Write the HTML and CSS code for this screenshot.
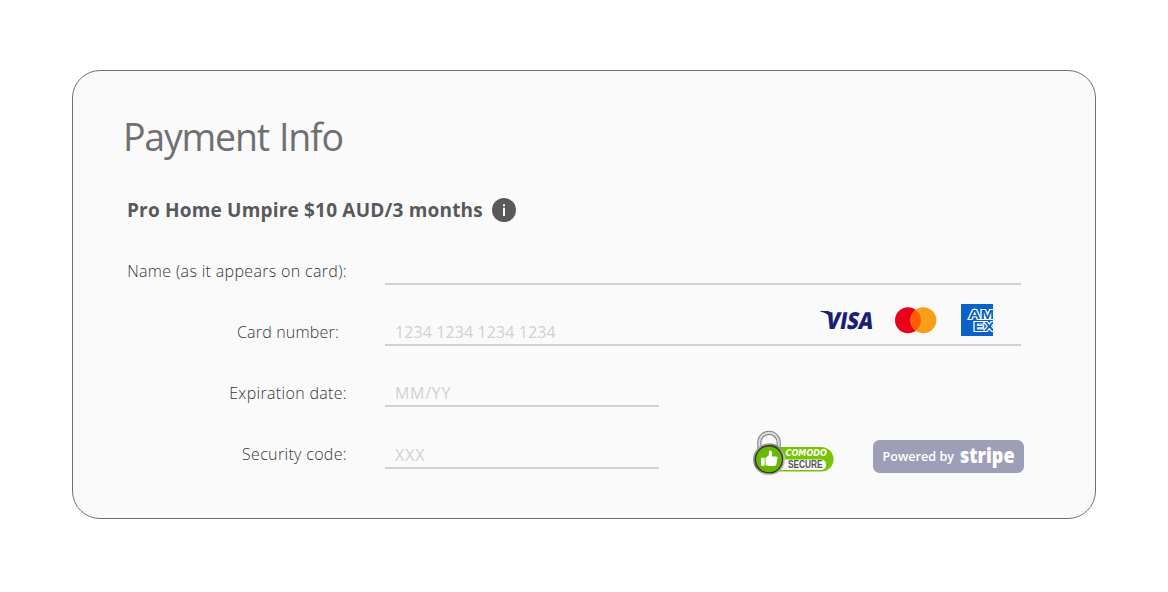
FILE: index.html
```html
<!DOCTYPE html>
<html lang="en">
<head>
<meta charset="utf-8">
<title>Payment Info</title>
<link rel="stylesheet" href="styles.css">
</head>
<body>
<main class="card">
  <h1 class="title"><span>Payment Info</span></h1>
  <div class="plan">
    <strong class="plan-name">Pro Home Umpire $10 AUD/3 months</strong>
    <svg class="info" width="24" height="24" viewBox="0 0 24 24"><circle cx="12" cy="12" r="12" fill="#58595b"/><path d="M11 6.2h2v2h-2zM11 9.700h2V18h-2z" fill="#fafafa"/></svg>
  </div>
  <div class="row">
    <label class="label name">Name (as it appears on card):</label>
    <div class="field"></div>
  </div>
  <div class="row">
    <label class="label number">Card number:</label>
    <div class="field">
      <span class="hint digits">1234 1234 1234 1234</span>
      <svg class="brands" width="180" height="36" viewBox="816 302 180 36">
        <g fill="#1a1f71">
          <path d="M820.200 311h7.500q2.100.2 2.600 2l1 5.500q-3.600-5.400-11.100-6.900z"/>
          <text class="visa" transform="translate(825 328.500) skewX(-10)" textLength="47" lengthAdjust="spacingAndGlyphs">VISA</text>
        </g>
        <circle cx="908" cy="320.300" r="13" fill="#eb001b"/>
        <circle cx="923.300" cy="320.300" r="13" fill="#f79e1b"/>
        <path d="M915.650 309.800a13 13 0 0 1 0 21a13 13 0 0 1 0-21z" fill="#ff5f00"/>
        <svg x="961" y="304" width="32" height="32" viewBox="961 304 32 32">
          <path d="M961 304h32v32h-32z" fill="#0a62c9"/>
          <text class="amex" x="968.500" y="319" textLength="26" lengthAdjust="spacingAndGlyphs">AM</text>
          <text class="amex" x="973.500" y="330.800" textLength="21" lengthAdjust="spacingAndGlyphs">EX</text>
        </svg>
      </svg>
    </div>
  </div>
  <div class="row">
    <label class="label expiry">Expiration date:</label>
    <div class="field short"><span class="hint date">MM/YY</span></div>
  </div>
  <div class="row">
    <label class="label code">Security code:</label>
    <div class="field short last"><span class="hint cvc">XXX</span></div>
    <div class="badges">
      <svg class="comodo" width="82" height="46" viewBox="752 430 82 46">
        <defs>
          <linearGradient id="rim" x1="0" y1="0" x2="1" y2="1"><stop offset="0" stop-color="#ccc"/><stop offset=".4" stop-color="#777"/><stop offset=".75" stop-color="#ccc"/><stop offset="1" stop-color="#777"/></linearGradient>
        </defs>
        <path d="M759.300 453v-10.500a9.700 9.700 0 0 1 19.400 0V453" fill="none" stroke="#858585" stroke-width="4.200"/>
        <path d="M759.300 453v-10.500a9.700 9.700 0 0 1 19.400 0V453" fill="none" stroke="#dedede" stroke-width="2"/>
        <rect x="766" y="447" width="67.500" height="24.500" rx="12.250" fill="#76c500"/>
        <path d="M776 459.500h46a5.400 5.400 0 0 1 0 10.500h-46z" fill="#fafafa"/>
        <text class="comodo-name" x="785.500" y="456.200" textLength="41.500" lengthAdjust="spacingAndGlyphs">COMODO</text>
        <text class="secure" x="788" y="468.300" textLength="34.500" lengthAdjust="spacingAndGlyphs">SECURE</text>
        <circle cx="769" cy="459.300" r="16" fill="url(#rim)"/>
        <circle cx="769" cy="459.300" r="14.300" fill="#303a25"/>
        <circle cx="769" cy="459.300" r="12.900" fill="#65b900"/>
        <path d="M761 457.800h3.600v8H761zM765.500 457.900l3.200-2.700.4-4.500q2.600-.8 3.100 2l-.4 3.700h4.400q1.700.2 1.300 1.900l-1.100 6q-.4 1.700-2 1.800h-6l-2.900-1.100z" fill="#fff"/>
      </svg>
      <svg class="stripe" width="151" height="33" viewBox="873 440 151 33">
        <rect x="873" y="440" width="151" height="33" rx="6.500" fill="#9e9fb7"/>
        <text class="powered" x="882.500" y="460.500" textLength="71.500" lengthAdjust="spacingAndGlyphs">Powered by</text>
        <text class="stripe-name" x="960" y="462.500" textLength="54.500" lengthAdjust="spacingAndGlyphs">stripe</text>
      </svg>
    </div>
  </div>
</main>
</body>
</html>
```
FILE: styles.css
```css
* { box-sizing: border-box; }
body { margin: 0; padding: 70px 72px; background: #fff; font-family: "Open Sans", "Noto Sans", sans-serif; color: #58595b; }
.card { width: 1024px; height: 449px; padding: 36px 71px 0 50px; border: 1px solid #707070; border-radius: 28px; background: #fafafa; }
.title { margin: 0; height: 60px; line-height: 60px; font-size: 37.5px; font-weight: 400; color: #707070; letter-spacing: -1.2px; word-spacing: 1.5px; white-space: nowrap; }
.plan { display: flex; align-items: center; gap: 9px; height: 28px; margin: 29px 0 25px 4px; }
.plan-name { width: 356px; font-size: 19px; line-height: 28px; font-weight: 700; letter-spacing: .19px; white-space: nowrap; }
.info { flex: none; }
.row { display: flex; height: 61px; padding-left: 4px; }
.label { width: 220px; padding-top: 8px; text-align: right; font-size: 16px; line-height: 28px; font-weight: 300; letter-spacing: .33px; color: #363739; white-space: nowrap; }
.number { padding-right: 8px; letter-spacing: .2px; }
.field { display: flex; align-items: flex-start; justify-content: space-between; width: 636px; height: 36px; margin-left: 38px; border-bottom: 2px solid #d1d1d1; }
.short { width: 274px; }
.last { height: 37px; }
.hint { padding: 8px 0 0 10px; font-size: 16px; line-height: 28px; letter-spacing: .1px; color: #d1d1d1; white-space: nowrap; }
.date { letter-spacing: .7px; }
.cvc { padding-top: 9px; letter-spacing: .9px; }
.brands { flex: none; margin: -8px 25px 0 0; }
.badges { display: flex; align-items: flex-start; gap: 39px; height: 46px; margin: -2px 0 0 93px; }
.badges svg { flex: none; }
.stripe { margin-top: 10px; }
.visa { font: 800 23.500px "Open Sans", sans-serif; }
.amex { font: 700 12.500px "Liberation Sans", Arial, sans-serif; fill: #0a62c9; stroke: #fff; stroke-width: 2px; paint-order: stroke; }
.comodo-name { font: italic 700 8px "DejaVu Sans", sans-serif; fill: #fff; }
.secure { font: 700 11px "Liberation Sans", Arial, sans-serif; fill: #55565a; }
.powered { font: 600 12.500px "Open Sans", sans-serif; fill: #fff; }
.stripe-name { font: 800 21px "Open Sans", sans-serif; fill: #fff; }
```
